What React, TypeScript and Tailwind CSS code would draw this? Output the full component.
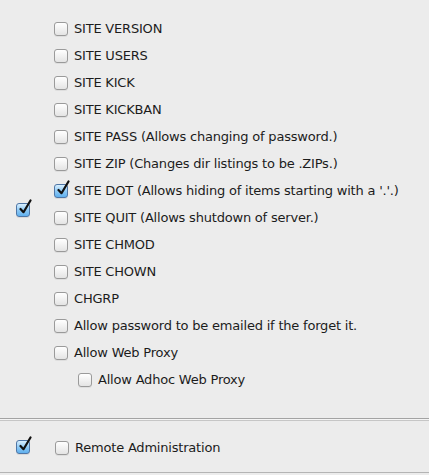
import React from 'react';

function Box({ checked = false }: { checked?: boolean }) {
  if (checked) {
    return (
      <span className="relative inline-block w-[14px] h-[14px] shrink-0 rounded-[3px] border border-[#4f76a6] bg-gradient-to-b from-[#d9f0ff] via-[#8fcaf5] to-[#5fb0ee] shadow-[0_1px_0_rgba(0,0,0,0.08)]">
        <svg className="absolute left-[1px] top-[-5px]" width="14" height="16" viewBox="0 0 14 16">
          <path d="M2.5 10 L5.5 13.2 L12.5 1.5" fill="none" stroke="#111" strokeWidth="2.2" strokeLinecap="round" strokeLinejoin="round" />
        </svg>
      </span>
    );
  }
  return (
    <span className="inline-block w-[14px] h-[14px] shrink-0 rounded-[3px] border border-[#9a9a9a] bg-gradient-to-b from-white to-[#e4e4e4] shadow-[0_1px_0_rgba(0,0,0,0.06)]" />
  );
}

const rows: { label: string; checked?: boolean; indent?: boolean }[] = [
  { label: 'SITE VERSION' },
  { label: 'SITE USERS' },
  { label: 'SITE KICK' },
  { label: 'SITE KICKBAN' },
  { label: 'SITE PASS (Allows changing of password.)' },
  { label: 'SITE ZIP (Changes dir listings to be .ZIPs.)' },
  { label: "SITE DOT (Allows hiding of items starting with a '.'.)", checked: true },
  { label: 'SITE QUIT (Allows shutdown of server.)' },
  { label: 'SITE CHMOD' },
  { label: 'SITE CHOWN' },
  { label: 'CHGRP' },
  { label: 'Allow password to be emailed if the forget it.' },
  { label: 'Allow Web Proxy' },
  { label: 'Allow Adhoc Web Proxy', indent: true },
];

export default function App() {
  return (
    <div className="w-[429px] h-[475px] bg-[#ececec] text-[#1c1c1c] text-[13px] overflow-hidden" style={{ fontFamily: '"DejaVu Sans", "Noto Sans", sans-serif' }}>
      <div className="flex items-center h-[418px]">
        <div className="w-[54px] pl-[16px] flex items-center pt-[1px]">
          <Box checked />
        </div>
        <div className="flex flex-col pt-[15px] pb-[25px]">
          {rows.map((r, i) => (
            <div key={i} className={`flex items-center gap-[6px] h-[27px] ${r.indent ? 'pl-[24px]' : ''}`}>
              <Box checked={r.checked} />
              <span className="tracking-[-0.2px]">{r.label}</span>
            </div>
          ))}
        </div>
      </div>
      <div className="h-px bg-[#a3a3a3]" />
      <div className="h-px bg-[#f4f4f4]" />
      <div className="h-px bg-[#c6c6c6]" />
      <div className="flex items-center h-[51px]">
        <div className="w-[55px] pl-[16px] flex items-center">
          <Box checked />
        </div>
        <div className="flex items-center gap-[6px] pt-[3px]">
          <Box />
          <span className="tracking-[-0.2px]">Remote Administration</span>
        </div>
      </div>
      <div className="h-px bg-[#b4b4b4]" />
    </div>
  );
}
